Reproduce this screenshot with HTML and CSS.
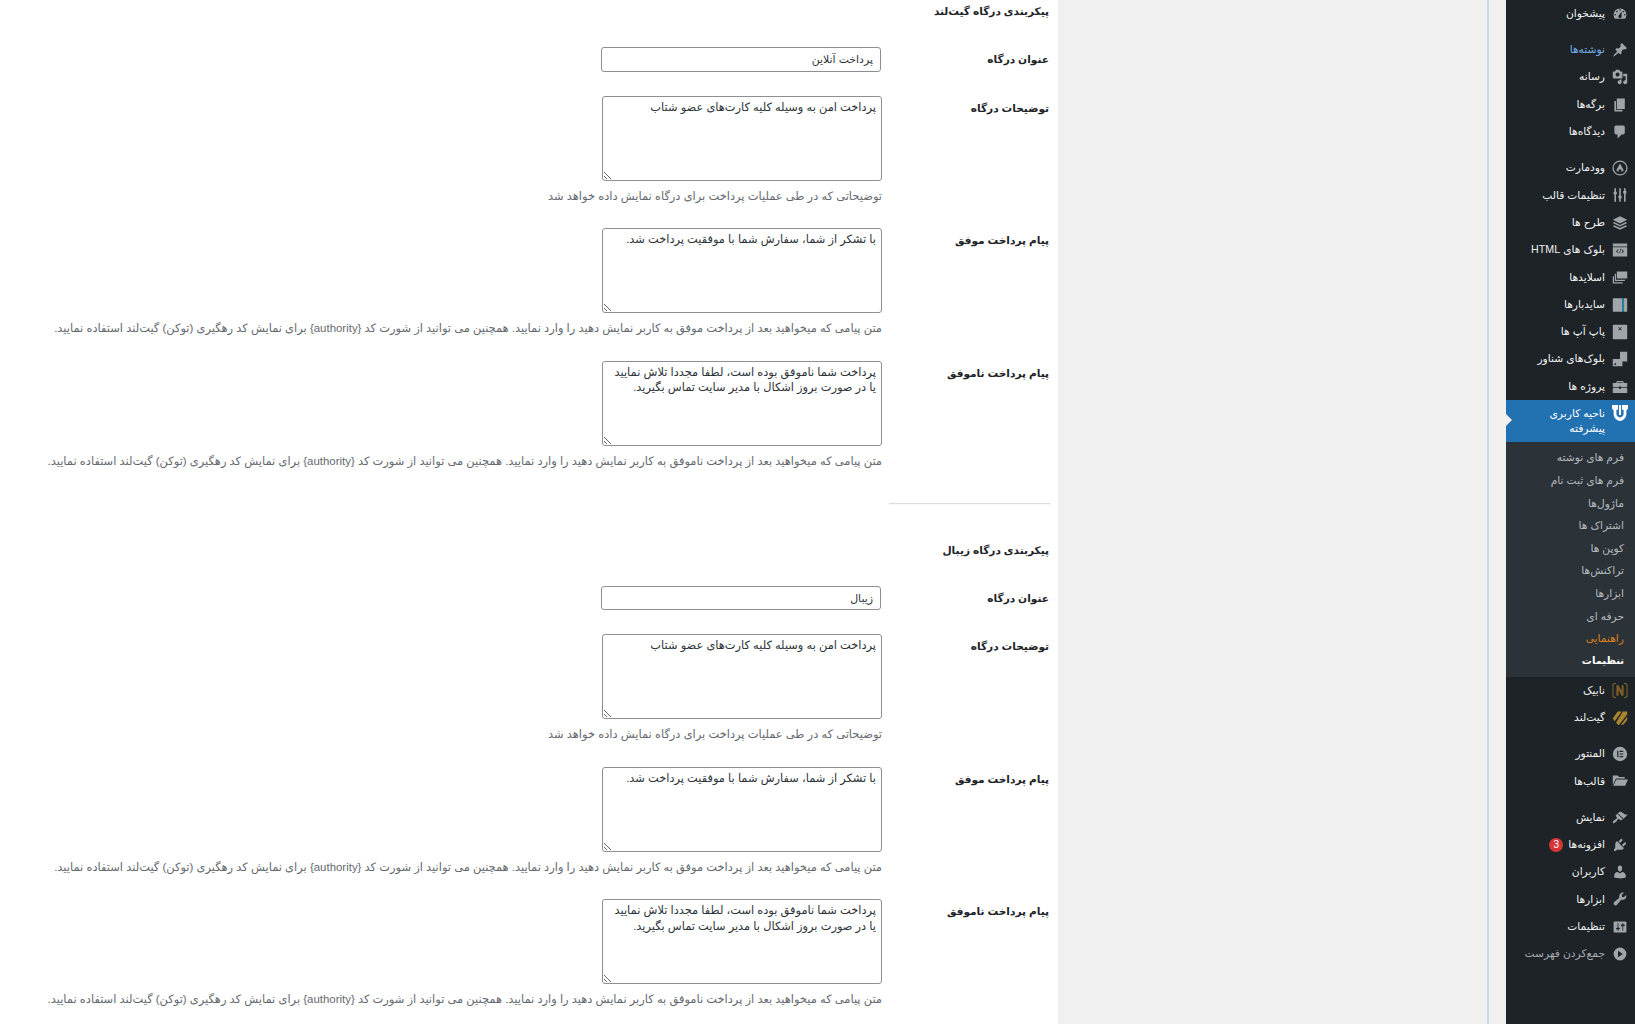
FILE: index.html
```html
<!DOCTYPE html>
<html lang="fa" dir="rtl">
<head>
<meta charset="utf-8">
<title>پیکربندی درگاه</title>
<link rel="stylesheet" href="styles.css">
</head>
<body>
<div class="layout">
<aside class="sidebar">
<ul class="menu">
<li class="item"><svg class="icon" viewBox="0 0 20 20"><path fill-rule="evenodd" d="M3.76 16h12.48c1.1-1.37 1.76-3.11 1.76-5 0-4.42-3.58-8-8-8s-8 3.58-8 8c0 1.89.66 3.63 1.76 5zM10 4c.55 0 1 .45 1 1s-.45 1-1 1-1-.45-1-1 .45-1 1-1zM6 6c.55 0 1 .45 1 1s-.45 1-1 1-1-.45-1-1 .45-1 1-1zm8 0c.55 0 1 .45 1 1s-.45 1-1 1-1-.45-1-1 .45-1 1-1zm-5.370 5.550L12 7v6c0 1.100-.9 2-2 2s-2-.9-2-2c0-.57.24-1.080.63-1.450zM4 10c.55 0 1 .45 1 1s-.45 1-1 1-1-.45-1-1 .45-1 1-1zm12 0c.55 0 1 .45 1 1s-.45 1-1 1-1-.45-1-1 .45-1 1-1z"/></svg><span>پیشخوان</span></li>
<li class="sep"></li>
<li class="item hover"><svg class="icon" viewBox="0 0 20 20"><path d="M10.440 3.020l1.820-1.820 6.360 6.350-1.830 1.820c-1.050-.68-2.480-.57-3.410.36l-.75.75c-.92.93-1.040 2.350-.35 3.410l-1.830 1.820-2.410-2.410-2.800 2.790c-.42.42-3.380 2.710-3.800 2.290s1.860-3.390 2.280-3.810l2.790-2.790L4.100 9.360l1.830-1.820c1.050.69 2.480.57 3.400-.36l.75-.75c.93-.92 1.050-2.350.36-3.410z"/></svg><span>نوشته‌ها</span></li>
<li class="item"><svg class="icon" viewBox="0 0 20 20"><path fill-rule="evenodd" d="M13 11V4c0-.55-.45-1-1-1h-1.670L9 1H5L3.670 3H2c-.55 0-1 .45-1 1v7c0 .55.45 1 1 1h10c.55 0 1-.45 1-1zM7 4.500c1.380 0 2.500 1.120 2.500 2.500S8.380 9.500 7 9.500 4.500 8.380 4.500 7 5.620 4.500 7 4.500zM14 6h5v10.500c0 1.380-1.120 2.500-2.500 2.500S14 17.880 14 16.500s1.120-2.500 2.500-2.500c.17 0 .34.02.5.05V9h-3V6zm-4 8.050V13h2v3.500c0 1.380-1.120 2.500-2.500 2.500S7 17.880 7 16.500 8.120 14 9.500 14c.17 0 .34.02.5.05z"/></svg><span>رسانه</span></li>
<li class="item"><svg class="icon" viewBox="0 0 20 20"><path d="M6 15V2h10v13H6zm-1 1h8v2H3V5h2v11z"/></svg><span>برگه‌ها</span></li>
<li class="item"><svg class="icon" viewBox="0 0 20 20"><path d="M5 2h9c1.100 0 2 .9 2 2v7c0 1.100-.9 2-2 2h-2l-5 5v-5H5c-1.100 0-2-.9-2-2V4c0-1.100.9-2 2-2z"/></svg><span>دیدگاه‌ها</span></li>
<li class="sep"></li>
<li class="item"><svg class="icon" viewBox="0 0 20 20"><path fill-rule="evenodd" d="M10 .5a9.500 9.500 0 100 19 9.500 9.500 0 000-19zm0 1.600a7.900 7.900 0 110 15.800 7.900 7.900 0 010-15.800zM10 4.500l-4.700 8.300c.8 1 1.900 1.500 3 1.800V12h3.400v2.600c1.100-.3 2.200-.8 3-1.800z"/></svg><span>وودمارت</span></li>
<li class="item"><svg class="icon" viewBox="0 0 20 20"><path d="M3 1.500h2V6h1v3H5v9.500H3V9H2V6h1zM9 1.500h2V11h1v3h-1v4.500H9V14H8v-3h1zM15 1.500h2V5h1v3h-1v10.500h-2V8h-1V5h1z"/></svg><span>تنظیمات قالب</span></li>
<li class="item"><svg class="icon" viewBox="0 0 20 20"><path d="M10 1.500l9 4.500-9 4.500L1 6zM2.800 8.800L10 12.400l7.200-3.600 1.800 1.200-9 4.500L1 10zM2.800 12.800L10 16.400l7.200-3.600 1.800 1.200-9 4.500-9-4.500z"/></svg><span>طرح ها</span></li>
<li class="item"><svg class="icon" viewBox="0 0 20 20"><path fill-rule="evenodd" d="M1 2h18v3.500H1zM1 6.500h18V18H1zM7.500 9l-2.500 2.500L7.500 14l.7-.7-1.800-1.800 1.800-1.800zm5 0l-.7.7 1.800 1.800-1.800 1.800.7.7 2.500-2.500zM10.500 8.500L9 14.500h.8l1.500-6z"/></svg><span>بلوک های HTML</span></li>
<li class="item"><svg class="icon" viewBox="0 0 20 20"><path fill-rule="evenodd" d="M6 3h13v9H6zM3.500 6H5v7.500h11V15H3.500zM1 9h1.500v7.500h11V18H1z"/></svg><span>اسلایدها</span></li>
<li class="item"><svg class="icon" viewBox="0 0 20 20"><path d="M1 1.500h11.500v17H1zM15 1.500h4v17h-4z"/><path class="stripe" d="M12.500 1.500H15v17h-2.500z"/></svg><span>سایدبارها</span></li>
<li class="item"><svg class="icon" viewBox="0 0 20 20"><path fill-rule="evenodd" d="M1 1h18v18H1zM8.500 3.700l-.7.7 1.500 1.500-1.500 1.500.7.7L10 6.600l1.500 1.500.7-.7-1.500-1.500 1.500-1.500-.7-.7L10 5.200z"/></svg><span>پاپ آپ ها</span></li>
<li class="item"><svg class="icon" viewBox="0 0 20 20"><path fill-rule="evenodd" d="M10 1h9v12h-6v6H1v-9h9zM3 16v1.500h1.500l1-1L4 15z"/></svg><span>بلوک‌های شناور</span></li>
<li class="item"><svg class="icon" viewBox="0 0 20 20"><path d="M7 2.500h6a1.500 1.500 0 011.500 1.500v1H19v5H11v-1H9v1H1V5h4.500V4A1.500 1.500 0 017 2.500zm0 1.500v1h6V4zM1 11h8v1.500h2V11h8v6.500H1z"/></svg><span>پروژه ها</span></li>
<li class="item active"><svg class="icon" viewBox="0 0 20 20"><path d="M0 0h7.500v6H5.500v5c0 2.500 2 4.500 4.500 4.500s4.500-2 4.500-4.500V6h-2V0H20v4.500L18 7v4c0 4.500-3.500 9-8 9s-8-4.500-8-9V7L0 4.500z"/><path d="M8.700 0h2.600v12.500H8.700z"/></svg><span>ناحیه کاربری پیشرفته</span></li>
<li class="submenu">
<ul class="sublist">
<li class="subitem">فرم های نوشته</li>
<li class="subitem">فرم های ثبت نام</li>
<li class="subitem">ماژول‌ها</li>
<li class="subitem">اشتراک ها</li>
<li class="subitem">کوپن ها</li>
<li class="subitem">تراکنش‌ها</li>
<li class="subitem">ابزارها</li>
<li class="subitem">حرفه ای</li>
<li class="subitem orange">راهنمایی</li>
<li class="subitem current">تنظیمات</li>
</ul>
</li>
<li class="item"><svg class="icon tall" viewBox="0 0 20 20"><path class="nabik" d="M5 .5H2.500L.5 2.500v15l2 2H5v-1.300H3.200L1.800 16.800V3.200L3.200 1.800H5zM15 .5h2.500l2 2v15l-2 2H15v-1.300h1.800l1.400-1.400V3.200l-1.400-1.400H15z"/><path class="nabik" d="M5.500 3.500h2.700l3.800 7V3.500h2.500v13h-2.500l-3.800-7v7H5.500z"/></svg><span>نابیک</span></li>
<li class="item"><svg class="icon" viewBox="0 0 20 20"><path class="gold" d="M7 2h5L3.500 14 1 10.500zM13.500 2H19v3.500L8.500 19 5 16zM19 8v4.500l-4.500 5.500-3.500 1z"/></svg><span>گیت‌لند</span></li>
<li class="sep"></li>
<li class="item"><svg class="icon" viewBox="0 0 20 20"><path fill-rule="evenodd" d="M10 1a9 9 0 100 18 9 9 0 000-18zM6.500 6H8v8H6.500zM9.500 6h4.500v1.500H9.500zM9.500 9.250h4.500v1.500H9.500zM9.500 12.500h4.500V14H9.500z"/></svg><span>المنتور</span></li>
<li class="item"><svg class="icon" viewBox="0 0 20 20"><path d="M1 3h6l2 2h7v2H5L1 15zM5.500 8H20l-3.500 8H1.500z"/></svg><span>قالب‌ها</span></li>
<li class="sep"></li>
<li class="item"><svg class="icon" viewBox="0 0 20 20"><path d="M14.480 11.060L7.410 3.990l1.500-1.500c.5-.56 2.300-.47 3.510.32 1.210.8 1.430 1.280 2.910 2.100 1.180.64 2.450 1.260 4.450.85zm-.71.71L6.700 4.700 4.930 6.470c-.39.39-.39 1.020 0 1.410l1.060 1.060c.39.39.39 1.030 0 1.420-.6.6-1.430 1.150-2.210 1.690-.35.26-.7.530-1.010.84C1.430 13.730.4 15.520 1.150 16.270c.75.75 2.570-.28 3.910-1.610.31-.31.58-.66.84-1.010.54-.78 1.090-1.610 1.690-2.210.39-.39 1.020-.39 1.410 0l1.060 1.060c.39.39 1.020.39 1.410 0z"/></svg><span>نمایش</span></li>
<li class="item"><svg class="icon" viewBox="0 0 20 20"><path d="M13.110 4.360L9.870 7.600 8 5.730l3.240-3.240c.35-.34 1.050-.2 1.560.32.52.51.66 1.210.31 1.550zm-8 1.770l.91-1.120 9.010 9.010-1.190.84c-.71.710-2.630 1.160-3.820 1.160H6.140L4.900 17.260c-.59.59-1.540.59-2.120 0-.59-.58-.59-1.530 0-2.120l1.240-1.240v-3.880c0-1.130.4-3.190 1.090-3.890zm7.260 3.970l3.240-3.240c.34-.35 1.040-.21 1.550.31.52.51.66 1.210.31 1.550l-3.240 3.250z"/></svg><span>افزونه‌ها</span><b class="badge">3</b></li>
<li class="item"><svg class="icon" viewBox="0 0 20 20"><path d="M10 9.250c-2.270 0-2.730-3.440-2.730-3.440C7 4.020 7.820 2 9.970 2c2.160 0 2.980 2.020 2.710 3.810 0 0-.41 3.440-2.680 3.440zm0 2.570L12.720 10c2.390 0 4.520 2.330 4.520 4.530v2.490s-3.650 1.130-7.240 1.130c-3.650 0-7.240-1.130-7.240-1.130v-2.490c0-2.250 1.940-4.480 4.470-4.480z"/></svg><span>کاربران</span></li>
<li class="item"><svg class="icon" viewBox="0 0 20 20"><path d="M16.680 9.770c-1.340 1.340-3.300 1.670-4.950.99l-5.410 6.520c-.99.99-2.590.99-3.580 0s-.99-2.590 0-3.570l6.520-5.420c-.68-1.650-.35-3.610.99-4.950 1.280-1.280 3.120-1.640 4.720-1.110l-2.910 2.910.54 2.230 2.230.54 2.910-2.910c.53 1.600.17 3.440-1.110 4.720z"/></svg><span>ابزارها</span></li>
<li class="item"><svg class="icon" viewBox="0 0 20 20"><path fill-rule="evenodd" d="M18 16V4c0-.55-.45-1-1-1H3c-.55 0-1 .45-1 1v12c0 .55.45 1 1 1h14c.55 0 1-.45 1-1zM8 11h1c.55 0 1 .45 1 1s-.45 1-1 1H8v1.500c0 .28-.22.5-.5.5s-.5-.22-.5-.5V13H6c-.55 0-1-.45-1-1s.45-1 1-1h1V5.500c0-.28.22-.5.5-.5s.5.22.5.5zm5-2h-1c-.55 0-1-.45-1-1s.45-1 1-1h1V5.500c0-.28.22-.5.5-.5s.5.22.5.5V7h1c.55 0 1 .45 1 1s-.45 1-1 1h-1v5.500c0 .28-.22.5-.5.5s-.5-.22-.5-.5z"/></svg><span>تنظیمات</span></li>
<li class="item collapse"><svg class="icon" viewBox="0 0 20 20"><path fill-rule="evenodd" d="M10 2a8 8 0 100 16 8 8 0 000-16zM7.500 6l6 4-6 4z"/></svg><span>جمع‌کردن فهرست</span></li>
</ul>
</aside>
<main class="main">
<div class="canvas">
<div class="panel">
<section class="gateway">
<h2 class="heading">پیکربندی درگاه گیت‌لند</h2>
<div class="row first"><label class="label">عنوان درگاه</label><div class="field"><input class="text" type="text" value="پرداخت آنلاین"></div></div>
<div class="row"><label class="label">توضیحات درگاه</label><div class="field"><textarea class="area">پرداخت امن به وسیله کلیه کارت‌های عضو شتاب</textarea><p class="help">توضیحاتی که در طی عملیات پرداخت برای درگاه نمایش داده خواهد شد</p></div></div>
<div class="row"><label class="label">پیام پرداخت موفق</label><div class="field"><textarea class="area">با تشکر از شما، سفارش شما با موفقیت پرداخت شد.</textarea><p class="help">متن پیامی که میخواهید بعد از پرداخت موفق به کاربر نمایش دهید را وارد نمایید. همچنین می توانید از شورت کد {authority} برای نمایش کد رهگیری (توکن) گیت‌لند استفاده نمایید.</p></div></div>
<div class="row"><label class="label">پیام پرداخت ناموفق</label><div class="field"><textarea class="area">پرداخت شما ناموفق بوده است، لطفا مجددا تلاش نمایید
یا در صورت بروز اشکال با مدیر سایت تماس بگیرید.</textarea><p class="help">متن پیامی که میخواهید بعد از پرداخت ناموفق به کاربر نمایش دهید را وارد نمایید. همچنین می توانید از شورت کد {authority} برای نمایش کد رهگیری (توکن) گیت‌لند استفاده نمایید.</p></div></div>
</section>
<hr class="divider">
<section class="gateway">
<h2 class="heading">پیکربندی درگاه زیبال</h2>
<div class="row first"><label class="label">عنوان درگاه</label><div class="field"><input class="text" type="text" value="زیبال"></div></div>
<div class="row"><label class="label">توضیحات درگاه</label><div class="field"><textarea class="area">پرداخت امن به وسیله کلیه کارت‌های عضو شتاب</textarea><p class="help">توضیحاتی که در طی عملیات پرداخت برای درگاه نمایش داده خواهد شد</p></div></div>
<div class="row"><label class="label">پیام پرداخت موفق</label><div class="field"><textarea class="area">با تشکر از شما، سفارش شما با موفقیت پرداخت شد.</textarea><p class="help">متن پیامی که میخواهید بعد از پرداخت موفق به کاربر نمایش دهید را وارد نمایید. همچنین می توانید از شورت کد {authority} برای نمایش کد رهگیری (توکن) گیت‌لند استفاده نمایید.</p></div></div>
<div class="row"><label class="label">پیام پرداخت ناموفق</label><div class="field"><textarea class="area">پرداخت شما ناموفق بوده است، لطفا مجددا تلاش نمایید
یا در صورت بروز اشکال با مدیر سایت تماس بگیرید.</textarea><p class="help">متن پیامی که میخواهید بعد از پرداخت ناموفق به کاربر نمایش دهید را وارد نمایید. همچنین می توانید از شورت کد {authority} برای نمایش کد رهگیری (توکن) گیت‌لند استفاده نمایید.</p></div></div>
</section>
</div>
</div>
</main>
</div>
</body>
</html>
```
FILE: styles.css
```css
* { box-sizing: border-box; }
html, body { margin: 0; padding: 0; height: 100%; overflow: hidden; }
body {
  background: #f0f0f1;
  color: #3c434a;
  font-family: "Liberation Sans", "DejaVu Sans", sans-serif;
  font-size: 10.7px;
  line-height: 15.6px;
}
.layout { display: flex; height: 1024px; }

/* sidebar */
.sidebar { width: 129px; flex: none; background: #1d2327; height: 1024px; }
.menu, .sublist { list-style: none; margin: 0; padding: 0; }
.item {
  position: relative;
  display: flex;
  align-items: center;
  gap: 7px;
  min-height: 27.3px;
  padding-right: 7px;
  color: #f0f0f1;
}
.sep { height: 9px; }
.icon { width: 16px; height: 16px; flex: none; fill: #a0a5aa; }
.icon.tall { height: 17px; }
.stripe { fill: #2a7a9c; }
.hover { color: #72aee6; }
.active { background: #2271b1; color: #fff; min-height: 41.7px; padding: 5px 7px 5px 20px; line-height: 15px; }
.active .icon { fill: #fff; align-self: flex-start; }
.active::after {
  content: "";
  position: absolute;
  left: 0;
  top: 14px;
  border-style: solid;
  border-width: 6px 0 6px 6px;
  border-color: transparent transparent transparent #f0f0f1;
}
.submenu { background: #2c3338; padding: 4.6px 0 4.4px; }
.subitem { height: 22.6px; line-height: 22.6px; padding-right: 11px; color: #b4b9be; }
.orange { color: #d97f1f; }
.current { color: #fff; font-weight: 700; font-size: 10px; }
.nabik { fill: #7d6029; }
.gold { fill: #a8842c; }
.badge {
  width: 14px;
  height: 14px;
  border-radius: 50%;
  margin-right: -2px;
  background: #d63638;
  color: #fff;
  font-weight: 400;
  font-size: 10px;
  line-height: 14px;
  text-align: center;
}
.collapse { color: #a7aaad; }

/* main */
.main { flex: 1; padding-right: 17px; min-width: 0; }
.canvas { height: 100%; border-right: 2px solid #c5d9e8; }
.panel {
  width: 1058px;
  height: 100%;
  margin-right: auto;
  background: #fff;
  padding: 4.4px 8px 0 0;
}
.heading { margin: 0; font-size: 10.6px; line-height: 15.6px; font-weight: 700; color: #1d2327; padding-right: 1px; }
.row { display: flex; margin-top: 23.5px; }
.row.first { margin-top: 27.4px; }
.row.first + .row { margin-top: 24px; }
.label { width: 168px; flex: none; padding: 5px 1px 0 0; font-size: 10.6px; font-weight: 700; color: #1d2327; }
.field { flex: 1; min-width: 0; }
.text {
  display: block;
  width: 280px;
  height: 24.5px;
  margin: 0 1px 0 0;
  padding: 0 7px;
  border: 1px solid #8c8f94;
  border-radius: 3px;
  background: #fff;
  color: #2c3338;
  font: inherit;
  font-size: 10.9px;
}
.area {
  display: block;
  width: 280px;
  height: 85px;
  margin: 0;
  padding: 3px 5px 2px;
  border: 1px solid #8c8f94;
  border-radius: 3px;
  background: #fff;
  color: #2c3338;
  font: inherit;
  font-size: 11.4px;
}
.help { margin: 8px 0 0; color: #646970; font-size: 11.45px; white-space: nowrap; height: 16px; }
.divider { width: 161px; height: 2px; margin: 33.6px 0 37.4px auto; border: 0; border-top: 1px solid #dcdcde; border-bottom: 1px solid #f6f7f7; }
```
